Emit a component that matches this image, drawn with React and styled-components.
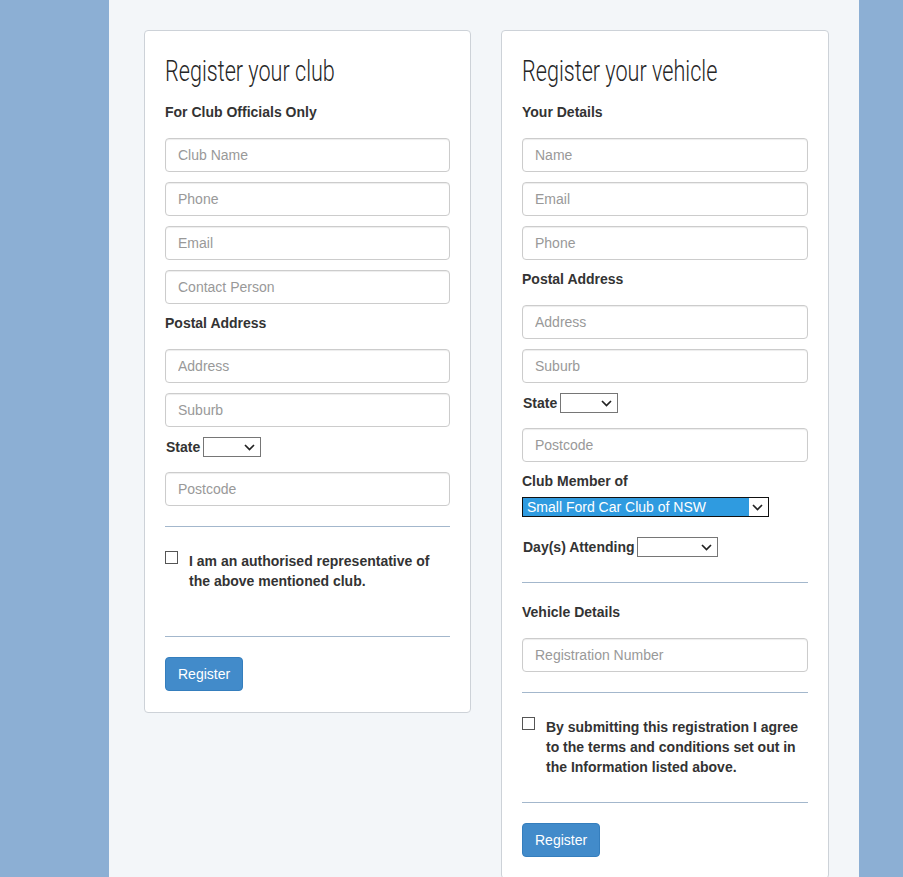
import React from "react";
import styled, { createGlobalStyle } from "styled-components";

const Global = createGlobalStyle`
  html, body { margin: 0; padding: 0; }
  body {
    background: #8cafd4;
    font-family: "Liberation Sans", Arial, sans-serif;
    font-size: 14px;
    color: #333;
  }
  * { box-sizing: border-box; }
`;

const Page = styled.div`
  margin-left: 109px;
  width: 750px;
  min-height: 877px;
  background: #f3f6f9;
  padding: 30px 30px 0 35px;
  display: flex;
  align-items: flex-start;
  gap: 30px;
`;

const Card = styled.section`
  width: ${(p) => p.$w}px;
  background: #fff;
  border: 1px solid #cdd2d8;
  border-radius: 4px;
  padding: 0 20px 21px;
  display: flex;
  flex-direction: column;
`;

const Title = styled.h2`
  margin: 20px 0 12px;
  height: 40px;
  font-family: Roboto, "Liberation Sans", sans-serif;
  font-weight: 300;
  font-size: 29px;
  line-height: 40px;
  color: #262626;
  white-space: nowrap;
`;

const TitleText = styled.span`
  display: inline-block;
  transform: scaleX(${(p) => p.$sx});
  transform-origin: 0 50%;
`;

const Label = styled.div`
  font-weight: bold;
  line-height: 18px;
  margin-bottom: ${(p) => p.$mb ?? 17}px;
`;

const Input = styled.input`
  display: block;
  width: 100%;
  height: 34px;
  padding: 6px 12px;
  margin-bottom: ${(p) => p.$mb ?? 10}px;
  font-family: inherit;
  font-size: 14px;
  color: #555;
  background: #fff;
  border: 1px solid #ccc;
  border-radius: 4px;
  box-shadow: inset 0 1px 1px rgba(0, 0, 0, 0.075);
  &::placeholder { color: #999; }
`;

const chevron = `url("data:image/svg+xml;utf8,<svg xmlns='http://www.w3.org/2000/svg' width='11' height='7' viewBox='0 0 11 7'><path d='M1 1 L5.5 5.5 L10 1' fill='none' stroke='%23222' stroke-width='1.7'/></svg>")`;

const InlineRow = styled.div`
  display: flex;
  align-items: center;
  gap: 3px;
  height: 20px;
  padding-left: 1px;
  margin-bottom: ${(p) => p.$mb ?? 15}px;
  font-weight: bold;
`;

const Select = styled.select`
  appearance: none;
  -webkit-appearance: none;
  width: ${(p) => p.$w}px;
  height: 20px;
  margin: 0;
  padding: 0 0 0 4px;
  font-family: "Liberation Sans", Arial, sans-serif;
  font-size: 14px;
  line-height: 18px;
  border: 1px solid ${(p) => (p.$focused ? "#111" : "#767676")};
  border-radius: 0;
  color: ${(p) => (p.$focused ? "#fff" : "#000")};
  background-color: #fff;
  background-image: ${chevron}${(p) =>
    p.$focused ? ", linear-gradient(to right, #2f9be0 calc(100% - 19px), #fff calc(100% - 19px))" : ""};
  background-repeat: no-repeat;
  background-position: right 5px center${(p) => (p.$focused ? ", 0 0" : "")};
  background-size: 11px 7px${(p) => (p.$focused ? ", 100% 100%" : "")};
  outline: none;
`;

const Block = styled.div`
  margin-bottom: ${(p) => p.$mb ?? 0}px;
`;

const Rule = styled.hr`
  border: 0;
  border-top: 1px solid #a3b7cc;
  margin: ${(p) => p.$mt ?? 20}px 0 ${(p) => p.$mb ?? 20}px;
`;

const CheckRow = styled.label`
  display: flex;
  align-items: flex-start;
  font-weight: bold;
  line-height: 20px;
  margin-top: 4px;
  padding-bottom: ${(p) => p.$pb ?? 0}px;
`;

const Box = styled.input.attrs({ type: "checkbox" })`
  appearance: none;
  -webkit-appearance: none;
  flex: none;
  width: 13px;
  height: 13px;
  margin: 0 11px 0 0;
  border: 1px solid #555;
  border-radius: 0;
  background: #fff;
`;

const Button = styled.button`
  align-self: flex-start;
  height: 34px;
  padding: 6px 12px;
  font-family: "Liberation Sans", Arial, sans-serif;
  font-size: 14px;
  color: #fff;
  background: #428bca;
  border: 1px solid #357ebd;
  border-radius: 4px;
`;

export default function App() {
  return (
    <>
      <Global />
      <Page>
        <Card $w={327}>
          <Title><TitleText $sx={0.745}>Register your club</TitleText></Title>
          <Label>For Club Officials Only</Label>
          <Input placeholder="Club Name" />
          <Input placeholder="Phone" />
          <Input placeholder="Email" />
          <Input placeholder="Contact Person" />
          <Label>Postal Address</Label>
          <Input placeholder="Address" />
          <Input placeholder="Suburb" />
          <InlineRow>
            <span>State</span>
            <Select $w={58} defaultValue="">
              <option value=""></option>
            </Select>
          </InlineRow>
          <Input placeholder="Postcode" $mb={0} />
          <Rule />
          <CheckRow $pb={25}>
            <Box />
            <span>I am an authorised representative of the above mentioned club.</span>
          </CheckRow>
          <Rule />
          <Button>Register</Button>
        </Card>
        <Card $w={328}>
          <Title><TitleText $sx={0.745}>Register your vehicle</TitleText></Title>
          <Label>Your Details</Label>
          <Input placeholder="Name" />
          <Input placeholder="Email" />
          <Input placeholder="Phone" />
          <Label>Postal Address</Label>
          <Input placeholder="Address" />
          <Input placeholder="Suburb" />
          <InlineRow>
            <span>State</span>
            <Select $w={58} defaultValue="">
              <option value=""></option>
            </Select>
          </InlineRow>
          <Input placeholder="Postcode" />
          <Label $mb={7}>Club Member of</Label>
          <Block $mb={20}>
            <Select $w={247} $focused defaultValue="sfcc">
              <option value="sfcc">Small Ford Car Club of NSW</option>
            </Select>
          </Block>
          <InlineRow $mb={0}>
            <span>Day(s) Attending</span>
            <Select $w={81} defaultValue="">
              <option value=""></option>
            </Select>
          </InlineRow>
          <Rule $mt={25} />
          <Label>Vehicle Details</Label>
          <Input placeholder="Registration Number" $mb={0} />
          <Rule />
          <CheckRow $pb={5}>
            <Box />
            <span>By submitting this registration I agree to the terms and conditions set out in the Information listed above.</span>
          </CheckRow>
          <Rule />
          <Button>Register</Button>
        </Card>
      </Page>
    </>
  );
}
